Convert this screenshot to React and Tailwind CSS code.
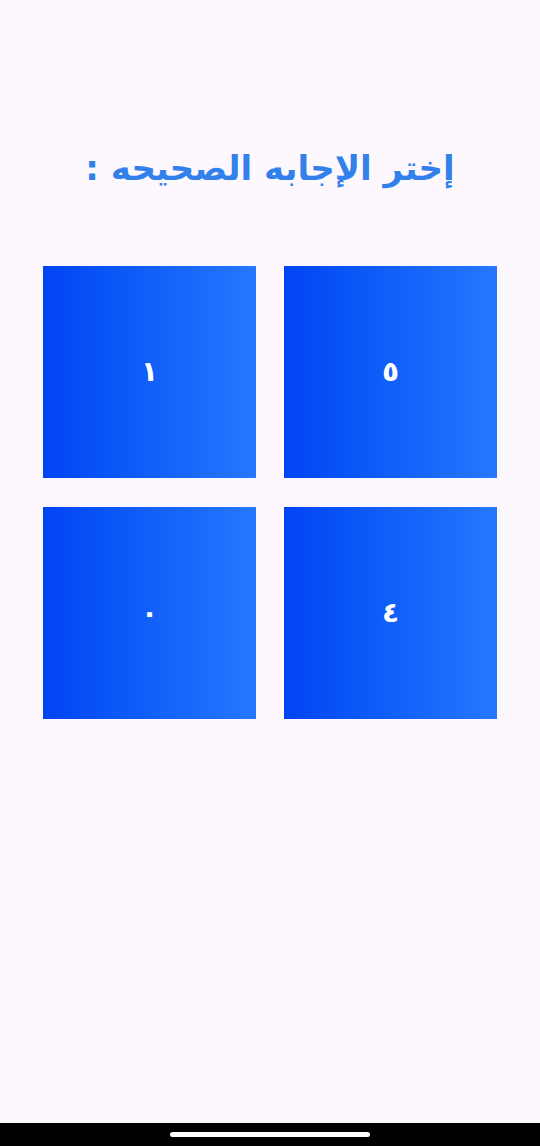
import React from 'react'

const answers = [
  { id: 1, label: '٥' },
  { id: 2, label: '١' },
  { id: 3, label: '٤' },
  { id: 4, label: '٠' },
]

const App = () => {
  return (
    <div className="w-[540px] h-[1146px] bg-[#fdf7fe] flex flex-col" dir="rtl">
      <div className="flex-1 flex flex-col items-center">
        {/* Title */}
        <h1
          className="mt-[144px] text-[34px] leading-[48px] font-bold text-[#3280ea]"
          style={{ fontFamily: '"DejaVu Sans", "Noto Sans", sans-serif' }}
        >
          إختر الإجابه الصحيحه :
        </h1>

        {/* Answers grid */}
        <div className="mt-[74px] grid grid-cols-2 gap-x-[28px] gap-y-[29px]">
          {answers.map((a) => (
            <button
              key={a.id}
              className="w-[213px] h-[212px] flex items-center justify-center bg-gradient-to-r from-[#0343f3] to-[#2677ff] text-white text-[28px] font-bold"
              style={{ fontFamily: '"DejaVu Sans", sans-serif' }}
            >
              {a.label}
            </button>
          ))}
        </div>
      </div>

      {/* Nav bar */}
      <div className="h-[23px] bg-black flex items-center justify-center">
        <div className="w-[200px] h-[5px] rounded-full bg-white" />
      </div>
    </div>
  )
}

export default App
